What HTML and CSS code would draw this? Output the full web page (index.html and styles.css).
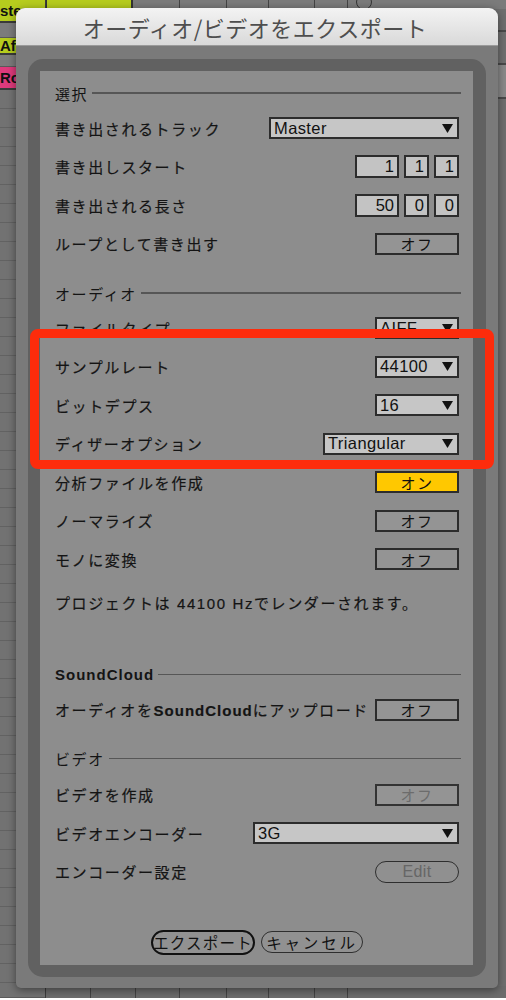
FILE: index.html
```html
<!DOCTYPE html>
<html lang="ja">
<head>
<meta charset="utf-8">
<title>オーディオ/ビデオをエクスポート</title>
<link rel="stylesheet" href="styles.css">
</head>
<body>
<div class="app">
  <div class="clips">
    <div class="slot lime s1"><span>ste</span></div>
    <div class="gap g1"></div>
    <div class="slot lime s2"><span>Afr</span></div>
    <div class="gap g2"></div>
    <div class="slot pink s3"><span>Ro</span></div>
    <div class="gap g3"></div>
  </div>
  <div class="tracks">
    <div class="strip top">
      <div class="cell limecell c87"></div>
      <div class="cell c47"></div>
      <div class="cell c47"></div>
      <div class="cell c42"></div>
      <div class="cell c46"></div>
      <div class="cell c33"></div>
      <div class="cell rest"><span class="ring"></span></div>
    </div>
    <div class="mid">
      <div class="scroll">
        <div class="sc a"></div>
        <div class="sc b"></div>
        <div class="sc c"></div>
      </div>
    </div>
    <div class="strip bottom">
      <div class="cell c45"></div>
      <div class="cell c45"></div>
      <div class="cell c44"></div>
      <div class="cell c47"></div>
      <div class="cell c42"></div>
      <div class="cell c46"></div>
      <div class="cell c33"></div>
      <div class="cell rest"></div>
    </div>
  </div>
</div>

<div class="dialog">
  <div class="titlebar">オーディオ/ビデオをエクスポート</div>
  <div class="dbody">
    <div class="frame">
      <div class="panel">
        <div class="section"><span>選択</span><i></i></div>
        <div class="row">
          <span class="label">書き出されるトラック</span>
          <div class="dd w190"><span>Master</span><svg viewBox="0 0 11 9" width="11" height="9"><polygon points="0,0 11,0 5.5,9"/></svg></div>
        </div>
        <div class="row">
          <span class="label">書き出しスタート</span>
          <div class="nums"><span class="num w44">1</span><span class="num w25">1</span><span class="num w25">1</span></div>
        </div>
        <div class="row">
          <span class="label">書き出される長さ</span>
          <div class="nums"><span class="num w44">50</span><span class="num w25">0</span><span class="num w25">0</span></div>
        </div>
        <div class="row">
          <span class="label">ループとして書き出す</span>
          <div class="btn">オフ</div>
        </div>

        <div class="section s2"><span>オーディオ</span><i></i></div>
        <div class="row">
          <span class="label">ファイルタイプ</span>
          <div class="dd w84"><span>AIFF</span><svg viewBox="0 0 11 9" width="11" height="9"><polygon points="0,0 11,0 5.5,9"/></svg></div>
        </div>
        <div class="row">
          <span class="label">サンプルレート</span>
          <div class="dd w84"><span>44100</span><svg viewBox="0 0 11 9" width="11" height="9"><polygon points="0,0 11,0 5.5,9"/></svg></div>
        </div>
        <div class="row">
          <span class="label">ビットデプス</span>
          <div class="dd w84"><span>16</span><svg viewBox="0 0 11 9" width="11" height="9"><polygon points="0,0 11,0 5.5,9"/></svg></div>
        </div>
        <div class="row">
          <span class="label">ディザーオプション</span>
          <div class="dd w136"><span>Triangular</span><svg viewBox="0 0 11 9" width="11" height="9"><polygon points="0,0 11,0 5.5,9"/></svg></div>
        </div>
        <div class="row">
          <span class="label">分析ファイルを作成</span>
          <div class="btn on">オン</div>
        </div>
        <div class="row">
          <span class="label">ノーマライズ</span>
          <div class="btn">オフ</div>
        </div>
        <div class="row">
          <span class="label">モノに変換</span>
          <div class="btn">オフ</div>
        </div>
        <p class="info">プロジェクトは 44100 Hzでレンダーされます。</p>

        <div class="section s3"><span class="sc-title">SoundCloud</span><i></i></div>
        <div class="row">
          <span class="label">オーディオを<b>SoundCloud</b>にアップロード</span>
          <div class="btn">オフ</div>
        </div>

        <div class="section s4"><span>ビデオ</span><i></i></div>
        <div class="row">
          <span class="label">ビデオを作成</span>
          <div class="btn dis">オフ</div>
        </div>
        <div class="row">
          <span class="label">ビデオエンコーダー</span>
          <div class="dd w206"><span>3G</span><svg viewBox="0 0 11 9" width="11" height="9"><polygon points="0,0 11,0 5.5,9"/></svg></div>
        </div>
        <div class="row">
          <span class="label">エンコーダー設定</span>
          <div class="pill">Edit</div>
        </div>

        <div class="actions">
          <div class="abtn primary">エクスポート</div>
          <div class="abtn secondary">キャンセル</div>
        </div>
      </div>
    </div>
  </div>
</div>

<div class="highlight"></div>
</body>
</html>
```

FILE: styles.css
```css
* { box-sizing: border-box; margin: 0; padding: 0; }

body {
  width: 506px;
  height: 1000px;
  overflow: hidden;
  position: relative;
  background: #ffffff;
  font-family: "Liberation Sans", "Noto Sans CJK JP", sans-serif;
  color: #141414;
}

/* ---------- background app ---------- */
.app {
  height: 998px;
  display: flex;
  background: #6f6f6f;
}
.clips {
  width: 46px;
  display: flex;
  flex-direction: column;
  border-right: 1px solid #3c3c3c;
}
.slot {
  font-weight: bold;
  font-size: 15px;
  color: #111;
  display: flex;
  align-items: center;
  overflow: hidden;
  border-bottom: 2px solid #3a3a3a;
}
.slot span { margin-left: 0; }
.lime { background: #b6cc1e; }
.pink { background: #df3a7c; }
.s1 { height: 23px; }
.s2 { height: 17px; }
.s3 { height: 23px; }
.gap { background: #7c7c7c; border-bottom: 1px solid #5a5a5a; }
.g1 { height: 15px; }
.g2 { height: 12px; }
.g3 { flex: 1; background: repeating-linear-gradient(#727272 0 18px, #626262 18px 19px); }

.tracks {
  flex: 1;
  display: flex;
  flex-direction: column;
}
.strip { display: flex; }
.strip.top { height: 9px; background: #7b7b7b; }
.strip.bottom { height: 12px; background: #6c6c6c; margin-top: auto; }
.cell { border-right: 1px solid #444; height: 100%; position: relative; }
.limecell { background: #b6cc1e; border-right: 2px solid #333; border-left: 1px solid #333; }
.c87 { width: 87px; }
.c45 { width: 45px; }
.c44 { width: 44px; }
.c47 { width: 47px; }
.c42 { width: 42px; }
.c46 { width: 46px; }
.c33 { width: 33px; }
.rest { flex: 1; border-right: none; }
.ring {
  position: absolute;
  left: 8px;
  top: 0;
  width: 16px;
  height: 16px;
  margin-top: -6px;
  border: 1.5px solid #333;
  border-radius: 50%;
}
.mid { flex: 1; display: flex; justify-content: flex-end; }
.scroll { width: 9px; display: flex; flex-direction: column; padding-top: 21px; }
.sc { border-top: 2px solid #4a4a4a; }
.sc.a { height: 33px; background: #707070; }
.sc.b { height: 34px; background: #8a8a8a; }
.sc.c { height: 10px; }

/* ---------- dialog ---------- */
.dialog {
  position: absolute;
  left: 16px;
  top: 8px;
  width: 482px;
  height: 980px;
  border-radius: 9px 9px 5px 5px;
  background: #7a7a7a;
  box-shadow: 0 2px 8px rgba(0, 0, 0, 0.45);
  overflow: hidden;
}
.titlebar {
  height: 38px;
  background: linear-gradient(#f3f3f3, #d9d9d9);
  border-bottom: 1px solid #9a9a9a;
  display: flex;
  align-items: center;
  justify-content: center;
  font-family: "Noto Sans CJK JP", sans-serif;
  font-size: 22px;
  letter-spacing: 0.5px;
  color: #4e4e4e;
  padding-right: 4px;
}
.dbody {
  height: 942px;
  padding: 13px 12px 11px 12px;
}
.frame {
  height: 918px;
  background: #616161;
  border-radius: 15px;
  padding: 12px 13px 12px 12px;
}
.panel {
  height: 894px;
  background: #8d8d8d;
  padding: 11px 14px 0 15px;
}

.section {
  height: 22px;
  display: flex;
  align-items: center;
  gap: 4px;
  margin-right: -2px;
  margin-bottom: 5px;
  font-size: 15px;
  letter-spacing: 1.6px;
}
.section i {
  flex: 1;
  height: 1.5px;
  background: #565656;
}
.section.s2 { margin-top: 19px; }
.section.s3 { margin-top: 49px; }
.section.s4 { margin-top: 18.5px; margin-bottom: 6px; }
.sc-title { font-weight: bold; letter-spacing: 1px; }

.row {
  height: 38.5px;
  display: flex;
  align-items: center;
  justify-content: space-between;
}
.label {
  font-size: 15px;
  letter-spacing: 1.6px;
  white-space: nowrap;
  -webkit-text-stroke: 0.2px #141414;
}
.label b { letter-spacing: 1px; }

.info {
  margin-top: 14px;
  height: 22px;
  line-height: 22px;
  font-size: 15px;
  letter-spacing: 1.6px;
  white-space: nowrap;
  -webkit-text-stroke: 0.2px #141414;
}

.dd {
  height: 22px;
  border: 2px solid #2c2c2c;
  background: #c6c6c6;
  display: flex;
  align-items: center;
  justify-content: space-between;
  padding: 0 4px 0 3px;
  font-size: 16.5px;
  letter-spacing: 0.4px;
  color: #111;
}
.dd svg { fill: #111; flex: none; }
.w84 { width: 84px; }
.w136 { width: 136px; }
.w190 { width: 190px; }
.w206 { width: 206px; }

.nums { display: flex; gap: 5px; }
.num {
  height: 23px;
  border: 2px solid #2c2c2c;
  background: #c3c3c3;
  text-align: right;
  padding-right: 3px;
  font-size: 16.5px;
  line-height: 19px;
  color: #111;
}
.w44 { width: 44px; }
.w25 { width: 25px; }

.btn {
  width: 84px;
  height: 22px;
  border: 2px solid #2c2c2c;
  background: #949494;
  display: flex;
  align-items: center;
  justify-content: center;
  font-family: "Noto Sans CJK JP", sans-serif;
  font-size: 15px;
  letter-spacing: 1.5px;
  color: #111;
}
.btn.on { background: #ffc800; }
.btn.dis { color: #6c6c6c; border-color: #333; }

.pill {
  width: 84px;
  height: 22px;
  border: 1.5px solid #2e2e2e;
  border-radius: 11px;
  background: #909090;
  display: flex;
  align-items: center;
  justify-content: center;
  font-size: 16px;
  color: #666;
  letter-spacing: 0.3px;
}

.actions {
  margin-top: 38.5px;
  display: flex;
  justify-content: center;
  align-items: center;
  gap: 6px;
}
.abtn {
  display: flex;
  align-items: center;
  justify-content: center;
  font-family: "Noto Sans CJK JP", sans-serif;
  font-size: 15.5px;
  color: #111;
  background: #919191;
}
.primary {
  width: 104px;
  height: 25px;
  border: 2.5px solid #111;
  border-radius: 13px;
  letter-spacing: 1.2px;
}
.secondary {
  width: 102px;
  height: 22px;
  border: 1.5px solid #2e2e2e;
  border-radius: 11px;
  letter-spacing: 2.8px;
}

/* ---------- annotation ---------- */
.highlight {
  position: absolute;
  left: 30px;
  top: 329px;
  width: 464px;
  height: 140px;
  border: 9px solid #fd2c0c;
  border-radius: 8px;
}
```
